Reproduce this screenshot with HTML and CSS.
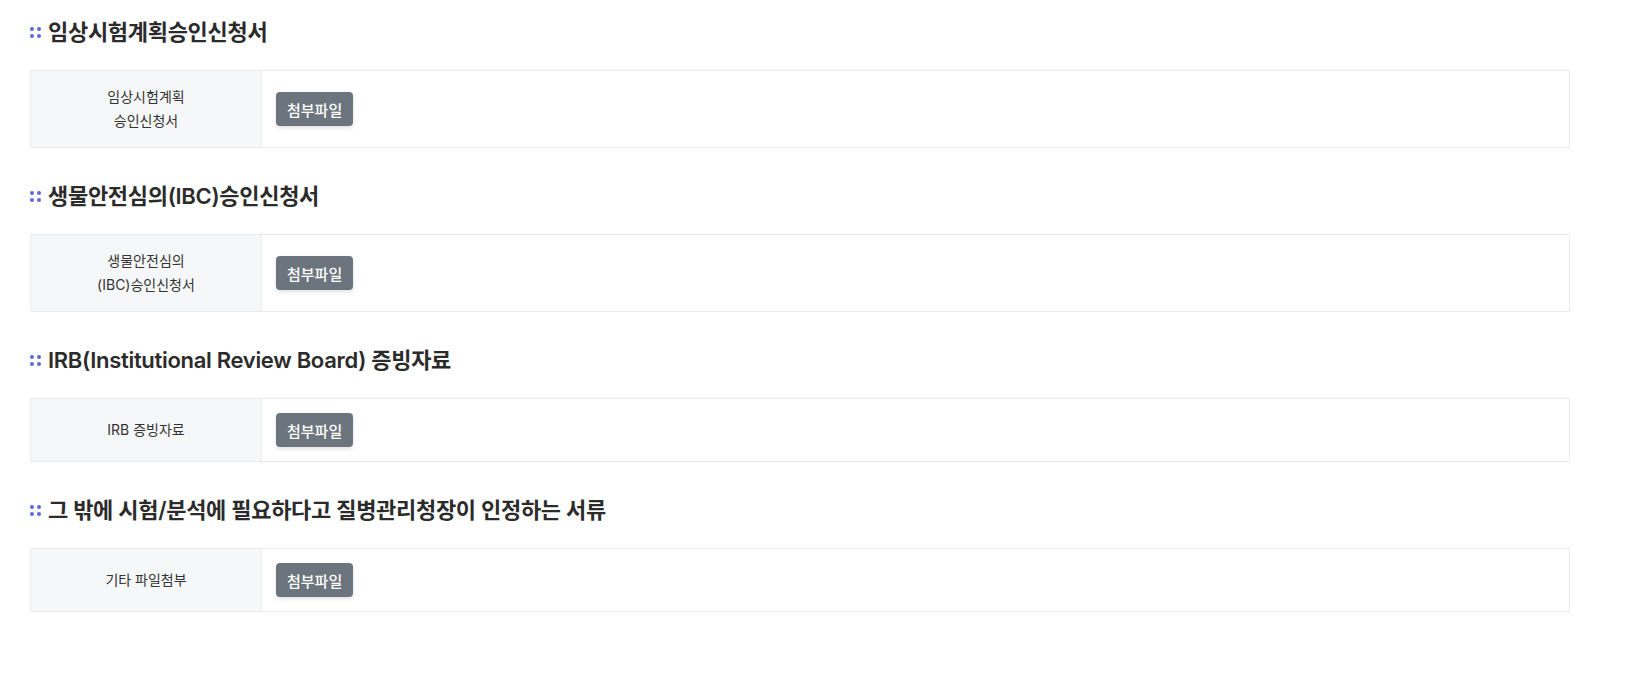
FILE: index.html
```html
<!DOCTYPE html>
<html lang="ko">
<head>
    <meta charset="UTF-8">
    <meta name="viewport" content="width=device-width, initial-scale=1.0">
    <title>첨부서류</title>
    <link rel="stylesheet" href="styles.css">
</head>
<body>
    <div class="wrap">
        <section class="doc-section">
            <h3 class="doc-title"><span class="dots"><i></i><i></i><i></i><i></i></span>임상시험계획승인신청서</h3>
            <table class="doc-table">
                <tr>
                    <th>임상시험계획<br>승인신청서</th>
                    <td><button type="button" class="btn-file">첨부파일</button></td>
                </tr>
            </table>
        </section>

        <section class="doc-section">
            <h3 class="doc-title"><span class="dots"><i></i><i></i><i></i><i></i></span>생물안전심의(IBC)승인신청서</h3>
            <table class="doc-table">
                <tr>
                    <th>생물안전심의<br>(IBC)승인신청서</th>
                    <td><button type="button" class="btn-file">첨부파일</button></td>
                </tr>
            </table>
        </section>

        <section class="doc-section">
            <h3 class="doc-title"><span class="dots"><i></i><i></i><i></i><i></i></span>IRB(Institutional Review Board) 증빙자료</h3>
            <table class="doc-table">
                <tr>
                    <th>IRB 증빙자료</th>
                    <td><button type="button" class="btn-file">첨부파일</button></td>
                </tr>
            </table>
        </section>

        <section class="doc-section">
            <h3 class="doc-title"><span class="dots"><i></i><i></i><i></i><i></i></span>그 밖에 시험/분석에 필요하다고 질병관리청장이 인정하는 서류</h3>
            <table class="doc-table">
                <tr>
                    <th>기타 파일첨부</th>
                    <td><button type="button" class="btn-file">첨부파일</button></td>
                </tr>
            </table>
        </section>
    </div>
</body>
</html>
```

FILE: styles.css
```css
body {
    margin: 0;
    background: #fff;
    font-family: Inter, "Noto Sans CJK KR", sans-serif;
    color: #333;
}
.wrap {
    width: 1540px;
    padding: 17px 0 0 30px;
}
.doc-section {
    margin-bottom: 33px;
}
.doc-title {
    display: flex;
    align-items: center;
    margin: 0 0 23px;
    font-size: 22px;
    line-height: 30px;
    font-weight: 600;
    letter-spacing: -0.3px;
    color: #2b2b2b;
}
.dots {
    display: grid;
    grid-template-columns: 4px 4px;
    gap: 3px;
    margin: 0 7px 0 0;
}
.dots i {
    width: 4px;
    height: 4px;
    border-radius: 50%;
    background: #5b6bd5;
}
.doc-table {
    width: 100%;
    border-collapse: collapse;
    border: 1px solid #ebebeb;
}
.doc-table th {
    width: 200px;
    padding: 14px 15px;
    background: #f6f7f9;
    border-right: 1px solid #ebebeb;
    font-size: 14px;
    font-weight: 400;
    line-height: 24px;
    color: #333;
    text-align: center;
}
.doc-table td {
    padding: 14px 14px;
    line-height: 24px;
}
.btn-file {
    height: 34px;
    padding: 0 11px;
    border: none;
    border-radius: 4px;
    background: #6c757d;
    color: #fff;
    font-family: inherit;
    font-size: 15px;
    font-weight: 500;
    box-shadow: 0 2px 4px rgba(0,0,0,0.12);
    vertical-align: middle;
    cursor: pointer;
}
```
